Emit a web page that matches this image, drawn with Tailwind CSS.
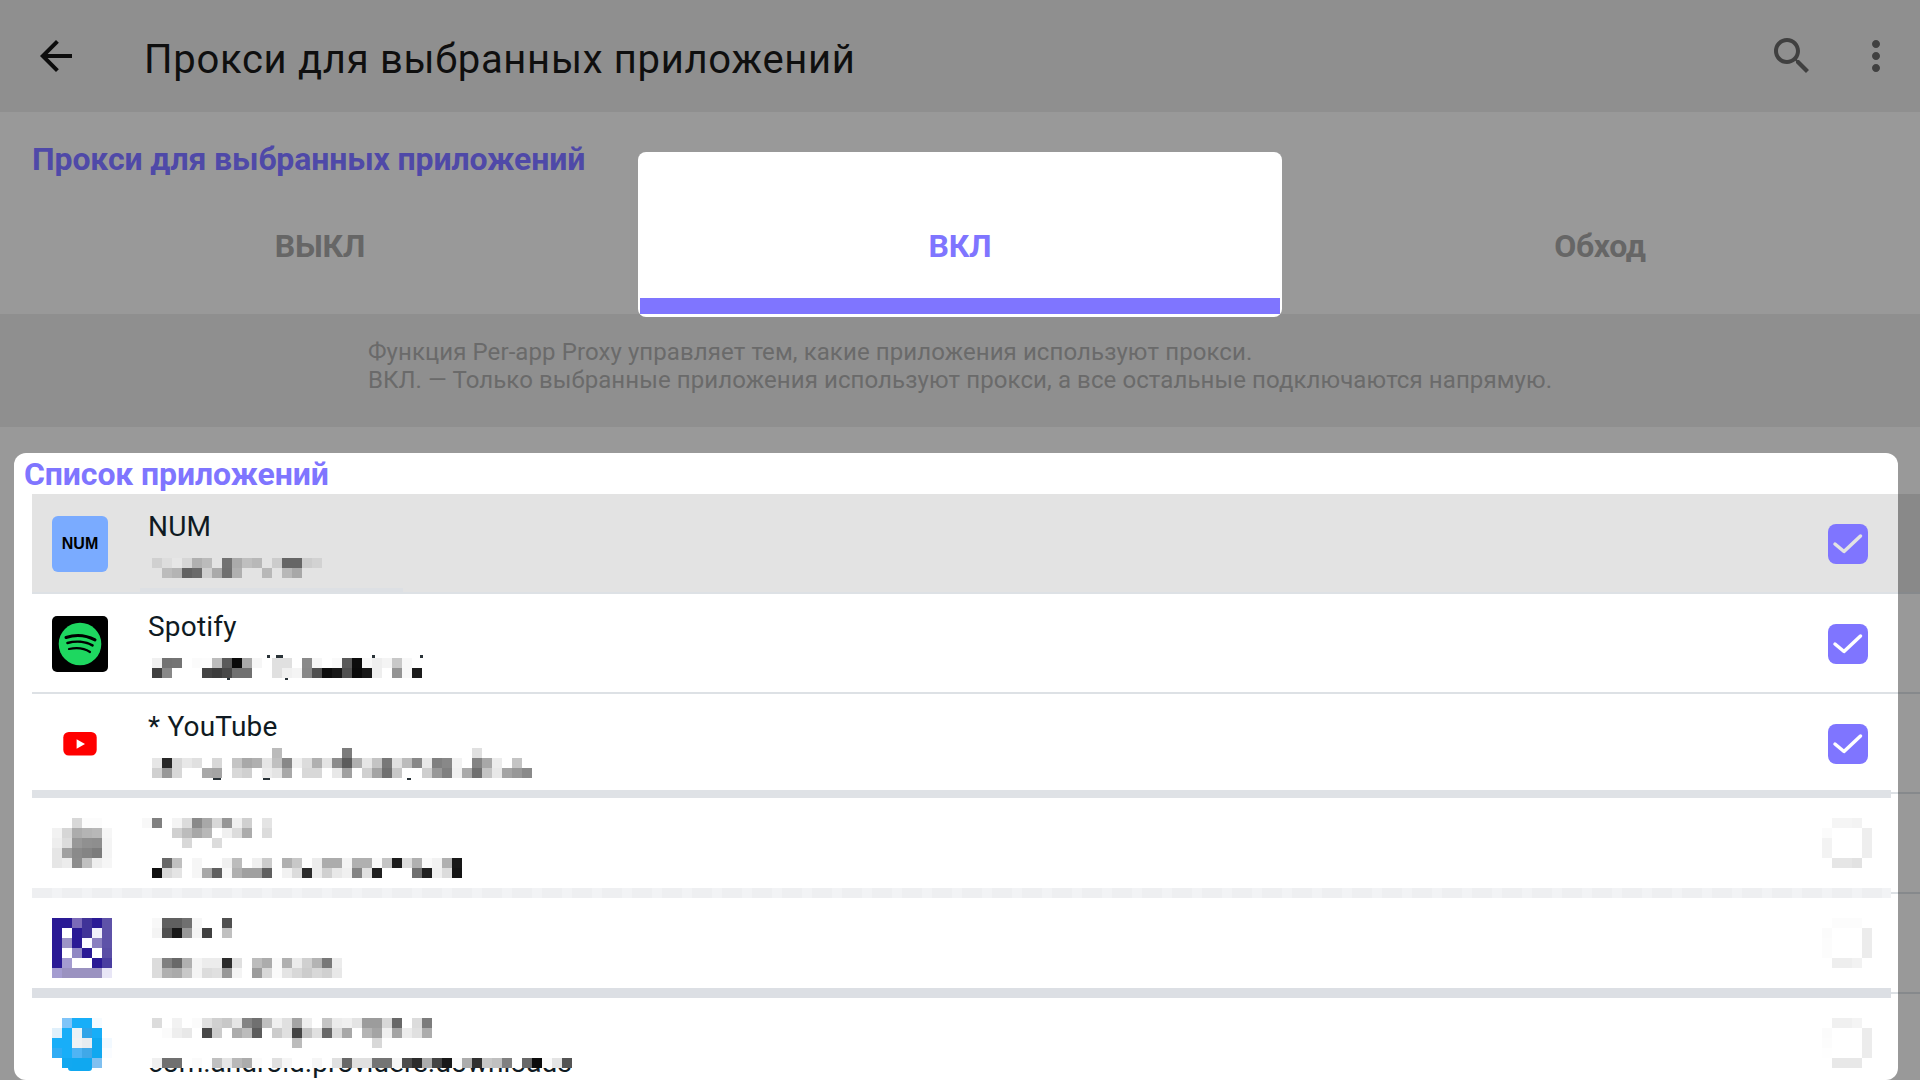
<!DOCTYPE html>
<html lang="ru">
<head>
    <meta charset="UTF-8">
    <meta name="viewport" content="width=device-width, initial-scale=1.0">
    <title>Прокси для выбранных приложений</title>
    <script src="https://cdn.jsdelivr.net/npm/@tailwindcss/browser@4"></script>
</head>
<body class="w-[1920px] h-[1080px] overflow-hidden bg-[#999999] font-[Roboto] text-[#0f1a22]">

    <!-- App bar -->
    <header class="flex items-center h-[112px] pl-8 pr-5 bg-[#8f8f8f]">
        <svg class="w-12 h-12 fill-[#0d0d0d]" viewBox="0 0 24 24"><path d="M20 11H7.83l5.59-5.59L12 4l-8 8 8 8 1.41-1.41L7.83 13H20v-2z"/></svg>
        <h1 class="ml-[64px] mt-[7px] flex-1 text-[40px] leading-[48px] tracking-[0.7px] text-[#0f0f0f]">Прокси для выбранных приложений</h1>
        <svg class="w-12 h-12 fill-[#404040]" viewBox="0 0 24 24"><path d="M15.5 14h-.79l-.28-.27C15.41 12.59 16 11.11 16 9.5 16 5.91 13.09 3 9.5 3S3 5.91 3 9.5 5.91 16 9.5 16c1.61 0 3.09-.59 4.23-1.57l.27.28v.79l5 4.99L20.49 19l-4.99-5zm-6 0C7.01 14 5 11.99 5 9.5S7.01 5 9.5 5 14 7.01 14 9.5 11.99 14 9.5 14z"/></svg>
        <svg class="w-12 h-12 ml-9 fill-[#404040]" viewBox="0 0 24 24"><path d="M12 8c1.1 0 2-.9 2-2s-.9-2-2-2-2 .9-2 2 .9 2 2 2zm0 2c-1.1 0-2 .9-2 2s.9 2 2 2 2-.9 2-2-.9-2-2-2zm0 6c-1.1 0-2 .9-2 2s.9 2 2 2 2-.9 2-2-.9-2-2-2z"/></svg>
    </header>

    <!-- Mode tabs -->
    <section class="h-[202px] pt-[27px]">
        <h2 class="h-10 pl-8 text-[32px] leading-10 font-bold tracking-[-0.12px] text-[#4f49a8]">Прокси для выбранных приложений</h2>
        <div class="relative grid grid-cols-3 h-[165px] -mt-[27px] text-[32px] font-bold tracking-[-0.3px] text-[#666666]">
            <div class="flex items-center justify-center pt-[42px] pb-[19px]">ВЫКЛ</div>
            <div class="flex flex-col -mx-[2px] rounded-lg bg-white text-[#7f75ff]">
                <div class="flex flex-1 items-center justify-center pt-[42px]">ВКЛ</div>
                <div class="h-4 mx-[2px] mb-[3px] bg-[#7f75ff]"></div>
            </div>
            <div class="flex items-center justify-center pt-[42px] pb-[19px]">Обход</div>
        </div>
    </section>

    <!-- Description -->
    <section class="flex justify-center h-[113px] pt-6 bg-[#8f8f8f] text-2xl leading-7 tracking-[0.09px] text-[#6a6a6a]">
        <p>Функция Per-app Proxy управляет тем, какие приложения используют прокси.<br>ВКЛ. — Только выбранные приложения используют прокси, а все остальные подключаются напрямую.</p>
    </section>

    <!-- App list -->
    <section class="w-[1884px] h-[627px] ml-[14px] mt-[26px] rounded-xl bg-white">
        <h2 class="h-[41px] pl-[10px] pt-px text-[32px] leading-10 font-bold tracking-[-0.12px] text-[#7f75ff]">Список приложений</h2>

        <div class="ml-[18px]">
            <!-- NUM -->
            <div class="relative flex w-[1888px] h-[100px]">
                <div class="flex w-[1866px] border-b-2 border-[#dde1e5] bg-[#e3e3e3]">
                    <div class="flex items-center justify-center w-14 h-14 ml-5 mt-[22px] rounded-md bg-[#7aabff] font-['Liberation_Sans'] text-base font-bold text-black">NUM</div>
                    <div class="flex-1 ml-10 pt-[13px] text-[28px] leading-10 tracking-[0.2px]">NUM</div>
                    <div class="w-10 h-10 mr-[30px] mt-[30px] rounded-lg bg-[#7f75ff]">
                        <svg class="w-10 h-10" viewBox="0 0 40 40" fill="none" stroke="#e3e3e3" stroke-width="3.5" stroke-linecap="round" stroke-linejoin="round"><path d="M7 20l9 7.5L32.5 12"/></svg>
                    </div>
                </div>
                <div class="w-[22px] border-b-2 border-[#86898c] bg-[#898989]"></div>
                <div class="absolute left-[108px] top-[94px] w-[263px] h-1 bg-[#dde0e4]"></div>
                <svg class="absolute left-[120px] top-[64px]" data-cells="d0 dd e6 d6 b0 bb .. 72 aa bf b8 .. cc 66 66 cc d2|.. bc b4 62 6a cf aa 70 b0 .. .. b8 .. b8 a8"></svg>
            </div>

            <!-- Spotify -->
            <div class="relative flex w-[1888px] h-[100px]">
                <div class="flex w-[1866px] border-b-2 border-[#dde1e5]">
                    <svg class="w-14 h-14 ml-5 mt-[22px]" viewBox="0 0 56 56">
                        <rect width="56" height="56" rx="5" fill="#000"/>
                        <circle cx="28" cy="28" r="21.3" fill="#1ed760"/>
                        <g fill="none" stroke="#000" stroke-linecap="round">
                            <path d="M14 21.5c9-3 20-2.4 29 2.4" stroke-width="3"/>
                            <path d="M15.5 27c8-2.2 18-1.6 25 2.4" stroke-width="2.6"/>
                            <path d="M17 33c7-1.6 15-1 21 3" stroke-width="2.2"/>
                        </g>
                    </svg>
                    <div class="flex-1 ml-10 pt-[13px] text-[28px] leading-10 tracking-[0.2px]">Spotify</div>
                    <div class="w-10 h-10 mr-[30px] mt-[30px] rounded-lg bg-[#7f75ff]">
                        <svg class="w-10 h-10" viewBox="0 0 40 40" fill="none" stroke="#fff" stroke-width="3.5" stroke-linecap="round" stroke-linejoin="round"><path d="M7 20l9 7.5L32.5 12"/></svg>
                    </div>
                </div>
                <div class="w-[22px] border-b-2 border-[#86898c]"></div>
                <svg class="absolute left-[120px] top-[64px]" data-cells="f0 72 74 .. fb fc bc 5a 0a a8 f6 .. e0 e0 .. 8a f6 .. fa 5a 0c f8 ee f4 c8 f8|40 88 .. .. .. 44 3c 48 70 70 .. .. e0 f0 f4 88 50 0e 18 50 0a 18 ee .. 94 f8 1c"></svg>
                <!-- bits of the package name that stick out of the mosaic -->
                <svg class="absolute left-[120px] top-[60px] fill-[#2a3338]" width="280" height="27"><rect x="115" y="1" width="3" height="3"/><rect x="124" y="1" width="7" height="3"/><rect x="220" y="1" width="3" height="3"/><rect x="268" y="1" width="3" height="3"/><rect x="75" y="24" width="3" height="2"/><rect x="133" y="24" width="3" height="2"/></svg>
            </div>

            <!-- YouTube -->
            <div class="relative flex w-[1888px] h-[100px]">
                <div class="flex w-[1866px] border-b-2 border-[#dde1e5]">
                    <svg class="w-14 h-14 ml-5 mt-[22px]" viewBox="0 0 56 56">
                        <rect x="11.3" y="16" width="33.4" height="23.6" rx="5.5" fill="#ff0000"/>
                        <path d="M24.6 23.2v9.6l8.4-4.8z" fill="#fff"/>
                    </svg>
                    <div class="flex-1 ml-10 pt-[13px] text-[28px] leading-10 tracking-[0.2px]">* YouTube</div>
                    <div class="w-10 h-10 mr-[30px] mt-[30px] rounded-lg bg-[#7f75ff]">
                        <svg class="w-10 h-10" viewBox="0 0 40 40" fill="none" stroke="#fff" stroke-width="3.5" stroke-linecap="round" stroke-linejoin="round"><path d="M7 20l9 7.5L32.5 12"/></svg>
                    </div>
                </div>
                <div class="w-[22px] border-b-2 border-[#86898c]"></div>
                <svg class="absolute left-[120px] top-[54px]" data-cells=".. .. .. .. .. .. .. .. .. .. .. .. bb .. .. .. .. .. .. 7c .. .. .. .. .. .. .. .. .. .. .. .. e0|e6 28 d8 e8 e0 .. d8 .. c4 a8 b0 e6 c0 88 f0 dc b0 e4 8c 5c b0 e6 c4 78 e0 bc 88 e8 80 88 f2 .. 84 a8 ec .. c4|d0 98 d8 .. .. a8 a4 .. d8 d0 .. ec e4 a8 .. d8 d8 .. e8 a0 .. d0 a4 70 c8 .. .. ce 98 80 f0 aa 70 c4 e8 a4 98 8a"></svg>
                <svg class="absolute left-[120px] top-[84px] fill-[#2a3338]" width="280" height="2"><rect x="61" width="8" height="2"/><rect x="111" width="7" height="2"/><rect x="255" width="4" height="2"/></svg>
                <div class="absolute left-0 top-[96px] w-[1859px] h-2 bg-[#dfe2e6]"></div>
            </div>

            <!-- Hidden app 1 -->
            <div class="relative flex w-[1888px] h-[100px]">
                <div class="flex-none w-[1866px] border-b-2 border-[#dde1e5]"></div>
                <div class="w-[22px] border-b-2 border-[#86898c]"></div>
                <svg class="absolute left-5 top-6" data-cells=".. .. d8 fc fc ..|f2 d6 ac b4 b8 f6|ee dc 98 90 8e f4|e6 a0 8a 84 7c f4|e6 ec 8c c0 ee f6"></svg>
                <svg class="absolute left-[110px] top-6" data-cells="f8 80 .. f4 dc 8a a8 d8 96 f0 d0 .. e4|.. .. .. d0 bc a8 b8 .. f0 dc ac .. dc|.. .. .. .. d8 .. .. dc"></svg>
                <svg class="absolute left-[120px] top-16" data-cells=".. 68 c0 .. f6 .. .. f0 bc .. f0 cc .. b0 c8 .. ec ac ac f4 b0 b0 fa c4 1c dc b0 fa f2 b0 18|10 d8 e4 .. f6 a8 60 f8 b0 a0 a0 60 .. f2 dc 2c ec d0 e8 f0 84 e0 20 .. .. .. 70 20 f0 dc 14"></svg>
                <svg class="absolute left-[1790px] top-6" data-cells=".. f5 f5 f3 ..|fb .. .. .. ee|f3 .. .. .. ee|f3 .. .. .. ee|.. e6 e6 e2 .."></svg>
                <div class="absolute left-0 top-[94px] w-[1859px] h-[10px] bg-[repeating-linear-gradient(90deg,#eeeff1_0,#eeeff1_20px,#f2f3f5_20px,#f2f3f5_30px)]"></div>
            </div>

            <!-- Hidden app 2 -->
            <div class="relative flex w-[1888px] h-[100px]">
                <div class="flex-none w-[1866px] border-b-2 border-[#dde1e5]"></div>
                <div class="w-[22px] border-b-2 border-[#86898c]"></div>
                <svg class="absolute left-5 top-6" data-cells="2a1a95 2a1a95 7b6ab8 403398 2a1a95 5e52a8|2a1a95 ffffff 2a1a95 403398 f0f0fa 5e52a8|2a1a95 9c94c6 2a1a95 fafaff 8a7fc0 5e52a8|2a1a95 ffffff 9088c4 2a1a95 ffffff 5a4ea5|2a1a95 a49cd0 ffffff ffffff 2a1a95 4a3ea0|a49cd0 9a92c0 9a92c0 9a92c0 9a92c0 e8e6f6"></svg>
                <svg class="absolute left-[120px] top-6" data-cells="f8 60 60 70 f6 .. .. 50|f4 50 18 98 f4 40 .. c0"></svg>
                <svg class="absolute left-[120px] top-16" data-cells="dc 80 68 b0 f4 ec ec 2c e0 .. bc ac fa b0 ec d0 b4 78 ec|dc b0 aa c8 f4 dc e0 98 f4 .. 9c d8 fa e4 d8 cc d8 d0 e8"></svg>
                <svg class="absolute left-[1790px] top-6" data-cells=".. fc fc fc ..|fb .. .. .. ec|fc .. .. .. ec|fc .. .. .. ec|.. ee ee f2 .."></svg>
                <div class="absolute left-0 top-[94px] w-[1859px] h-[10px] bg-[#dcdfe4]"></div>
            </div>

            <!-- Downloads, cut off by the bottom edge -->
            <div class="relative flex w-[1888px] h-[100px]">
                <div class="flex-none w-[1866px] pl-[116px] pt-[49px] text-[28px] leading-10">com.android.providers.downloads</div>
                <svg class="absolute left-5 top-6" data-cells=".. 7fc4f8 18aef8 18aef8 f6fbff ..|e0f0fb 18aef8 eaf2f6 30a4e8 18aef8 ..|18aef8 18aef8 f0f2f4 e8ecf0 10a8f0 f2f9ff|30acf4 18aef8 50b4f4 40a8e8 10a8f0 fafcff|.. 12a8f0 10a8f0 10a8f0 80c0f0 .."></svg>
                <div class="absolute left-9 top-[74px] w-6 h-[3px] rounded-b-full bg-[#10a8f0]"></div>
                <svg class="absolute left-[120px] top-6" data-cells="dc .. f2 .. fb e0 d0 c8 e6 84 70 c0 f0 e0 a4 ee .. c4 ec f0 e4 9c 9c d8 68 .. dc 7c|.. fb ee e8 .. 48 cc .. ac bc 5c .. cc e0 44 c4 e0 68 dc a8 .. b4 a4 f0 a4 ec e0 ac|.. .. .. .. .. .. .. .. .. .. .. .. .. .. bc .. .. .. .. .. .. .. d8"></svg>
                <svg class="absolute left-[110px] top-[54px] bg-white" data-cells=".. .. .. .. .. .. .. .. .. .. .. .. .. .. .. .. .. .. .. .. .. .. .. .. .. .. .. .. .. .. .. .. .. .. .. .. .. .. .. .. .. .. ..|.. f0 70 70 .. fb .. c0 e6 b8 ac fb .. e0 f6 .. .. f6 .. e0 68 e0 e0 74 74 f6 4c 2c ac 44 18 fa ac 30 c8 c0 80 .. 68 0c fb e4 54"></svg>
                <svg class="absolute left-[1790px] top-6" data-cells=".. f0 f0 f4 ..|fb .. .. .. ec|fc .. .. .. ec|fe .. .. .. ec|.. e8 e8 e8 .."></svg>
            </div>
        </div>
    </section>

    <script>
        // pixelated areas: rows split by |, each cell a grey level or a full hex colour
        document.querySelectorAll('svg[data-cells]').forEach(function (svg) {
            var rows = svg.dataset.cells.split('|').map(function (r) { return r.split(' '); });
            var cols = Math.max.apply(null, rows.map(function (r) { return r.length; }));
            svg.setAttribute('width', cols * 10);
            svg.setAttribute('height', rows.length * 10);
            svg.setAttribute('shape-rendering', 'crispEdges');
            rows.forEach(function (row, y) {
                row.forEach(function (c, x) {
                    if (c === '..') return;
                    var rect = document.createElementNS('http://www.w3.org/2000/svg', 'rect');
                    rect.setAttribute('x', x * 10);
                    rect.setAttribute('y', y * 10);
                    rect.setAttribute('width', 10);
                    rect.setAttribute('height', 10);
                    rect.setAttribute('fill', '#' + (c.length === 2 ? c + c + c : c));
                    svg.appendChild(rect);
                });
            });
        });
    </script>
</body>
</html>
